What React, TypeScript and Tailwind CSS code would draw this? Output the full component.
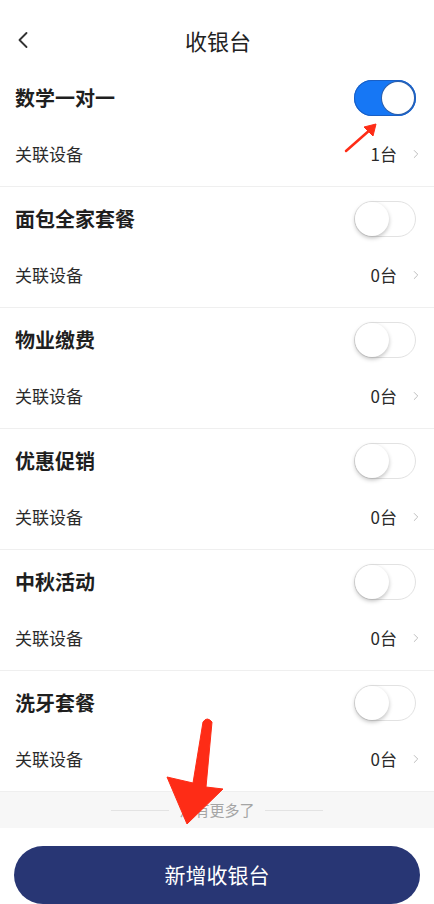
import { ChevronLeft, ChevronRight } from 'lucide-react'

const items = [
  { name: '数学一对一', count: 1, on: true },
  { name: '面包全家套餐', count: 0, on: false },
  { name: '物业缴费', count: 0, on: false },
  { name: '优惠促销', count: 0, on: false },
  { name: '中秋活动', count: 0, on: false },
  { name: '洗牙套餐', count: 0, on: false },
]

function Toggle({ on }: { on: boolean }) {
  if (on) {
    return (
      <div className="flex h-[36px] w-[62px] items-center justify-end rounded-full bg-[#1677f5] p-[2px] shadow-[inset_0_0_0_1px_#1a5fc4]">
        <div className="h-[32px] w-[32px] rounded-full bg-white shadow-[0_0_0_1px_#2e5fa8]" />
      </div>
    )
  }
  return (
    <div className="flex h-[36px] w-[62px] items-center rounded-full border border-[#e2e2e2] bg-white">
      <div className="h-[34px] w-[34px] rounded-full bg-white shadow-[0_2px_4px_rgba(0,0,0,0.25)]" />
    </div>
  )
}

function Row({ name, count, on }: { name: string; count: number; on: boolean }) {
  return (
    <div className="h-[121px] border-b border-[#efefef] pl-[15px] pt-[14px]">
      <div className="flex h-[36px] items-center justify-between pr-[18px]">
        <span className="text-[20px] font-semibold text-[#1f1f1f]">{name}</span>
        <Toggle on={on} />
      </div>
      <div className="mt-[20px] flex h-[36px] items-center justify-between pr-[11px]">
        <span className="text-[17px] text-[#2a2a2a]">关联设备</span>
        <div className="flex items-center gap-[12px]">
          <span className="text-[17px] text-[#2a2a2a]">{count}台</span>
          <ChevronRight size={14} strokeWidth={1.5} className="text-[#b5b5b5]" />
        </div>
      </div>
    </div>
  )
}

export default function App() {
  return (
    <div
      className="relative h-[904px] w-[434px] overflow-hidden bg-white"
      style={{ fontFamily: '"Noto Sans CJK SC", "Noto Sans", sans-serif' }}
    >
      <div className="relative flex h-[66px] items-start justify-center pt-[24px]">
        <ChevronLeft size={28} strokeWidth={1.6} className="absolute left-[9px] top-[26px] text-[#333]" />
        <span className="pl-[2px] text-[22px] leading-[32px] text-[#222]">收银台</span>
      </div>

      {items.map((it) => (
        <Row key={it.name} {...it} />
      ))}

      <div className="flex h-[36px] items-center justify-center gap-[10px] bg-[#f7f7f7]">
        <div className="h-px w-[58px] bg-[#e3e3e3]" />
        <span className="text-[15px] text-[#a5a5a5]">没有更多了</span>
        <div className="h-px w-[58px] bg-[#e3e3e3]" />
      </div>

      <div className="px-[14px] pt-[18px]">
        <button className="flex h-[58px] w-full items-center justify-center rounded-full bg-[#283674] text-[21px] text-white">
          新增收银台
        </button>
      </div>

      <svg className="pointer-events-none absolute left-0 top-0" width="434" height="904" viewBox="0 0 434 904">
        <g fill="#fe2c16" stroke="#fe2c16" strokeLinejoin="round">
          <path d="M346 151 L371 129" strokeWidth="2.5" strokeLinecap="round" fill="none" />
          <path d="M376 124 L364 127 L373 136 Z" strokeWidth="1" />
          <path d="M203 722 Q207 716 212 722 L206 787 L223 789 L187 824 L167 777 L193 783 Z" strokeWidth="1" />
        </g>
      </svg>
    </div>
  )
}
